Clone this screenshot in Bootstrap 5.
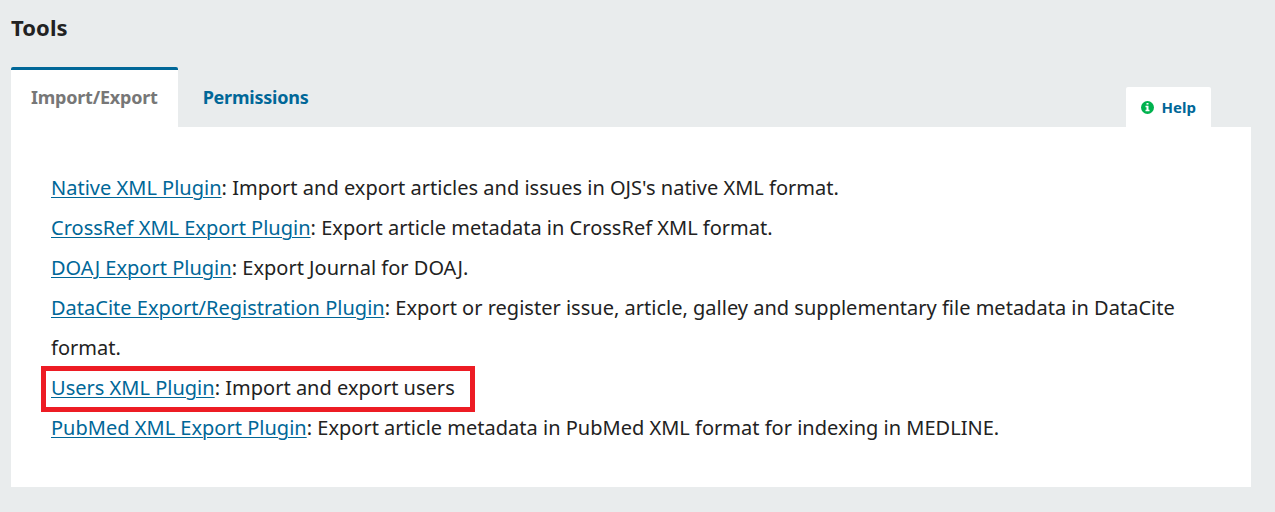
<!DOCTYPE html>
<html lang="en">

<head>
    <meta charset="UTF-8">
    <meta name="viewport" content="width=device-width, initial-scale=1">
    <title>Tools</title>
    <link href="https://cdn.jsdelivr.net/npm/bootstrap@5.3.0/dist/css/bootstrap.min.css" rel="stylesheet">
    <style>
        body {
            background-color: #e9eced;
            color: #222;
            font-family: "Noto Sans", sans-serif;
            font-size: 20px;
            letter-spacing: 0.01px;
            line-height: 40px;
            overflow: hidden;
        }

        a {
            color: #006798;
        }

        .tools-page {
            padding: 7px 24px 0 11px;
        }

        .tools-title {
            font-size: 22px;
            font-weight: 700;
            letter-spacing: 0.1px;
            line-height: 40px;
            margin-bottom: 20px;
        }

        .tools-tabs {
            --bs-nav-link-padding-x: 20px;
            --bs-nav-link-padding-y: 0;
            --bs-nav-link-color: #006798;
            gap: 5px;
        }

        .tools-tabs .nav-link {
            border-top: 3px solid transparent;
            border-radius: 2px 2px 0 0;
            font-size: 18px;
            font-weight: 700;
            height: 60px;
            letter-spacing: -0.22px;
            line-height: 55px;
        }

        .tools-tabs .nav-link.active {
            background-color: #fff;
            border-top-color: #006798;
            color: #777;
        }

        .help-link {
            border-radius: 2px 2px 0 0;
            font-size: 15px;
            font-weight: 700;
            height: 40px;
            margin-right: 40px;
            padding: 0 15px;
            gap: 8px;
        }

        .tools-panel {
            height: 360px;
            padding: 41px 40px;
        }

        .tools-panel a {
            text-decoration-thickness: 1px;
            text-underline-offset: 2px;
        }

        .plugin-highlight::after {
            content: "";
            position: absolute;
            top: -2px;
            left: -10px;
            width: 434px;
            height: 46px;
            border: 5px solid #ed1c24;
            pointer-events: none;
        }
    </style>
</head>

<body>
    <main class="tools-page">
        <h1 class="tools-title">Tools</h1>

        <div class="d-flex justify-content-between align-items-end">
            <ul class="nav tools-tabs">
                <li class="nav-item"><a class="nav-link active" href="#">Import/Export</a></li>
                <li class="nav-item"><a class="nav-link" href="#">Permissions</a></li>
            </ul>
            <a href="#" class="help-link bg-white d-flex align-items-center text-decoration-none">
                <svg width="13" height="13" viewBox="0 0 13 13" aria-hidden="true">
                    <circle cx="6.5" cy="6.5" r="6.5" fill="#00b24e" />
                    <path fill="#fff" d="M5.5 2h2v1.6h-2zM4.5 4.8h3v4h1v1.4h-4V8.8h1V6.2h-1z" />
                </svg>
                Help
            </a>
        </div>

        <div class="tools-panel bg-white">
            <ul class="list-unstyled mb-0">
                <li><a href="#">Native XML Plugin</a>: Import and export articles and issues in OJS's native XML format.</li>
                <li><a href="#">CrossRef XML Export Plugin</a>: Export article metadata in CrossRef XML format.</li>
                <li><a href="#">DOAJ Export Plugin</a>: Export Journal for DOAJ.</li>
                <li><a href="#">DataCite Export/Registration Plugin</a>: Export or register issue, article, galley and supplementary file metadata in DataCite format.</li>
                <li class="plugin-highlight position-relative"><a href="#">Users XML Plugin</a>: Import and export users</li>
                <li><a href="#">PubMed XML Export Plugin</a>: Export article metadata in PubMed XML format for indexing in MEDLINE.</li>
            </ul>
        </div>
    </main>

    <script src="https://cdn.jsdelivr.net/npm/bootstrap@5.3.0/dist/js/bootstrap.bundle.min.js"></script>
</body>

</html>
